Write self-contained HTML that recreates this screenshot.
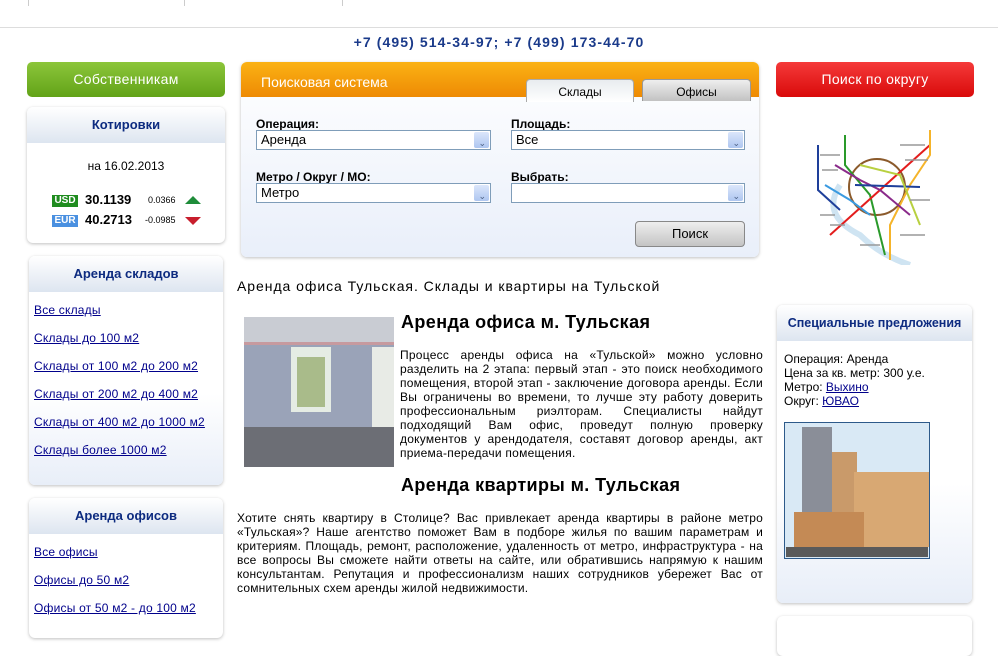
<!DOCTYPE html>
<html><head><meta charset="utf-8"><style>
*{margin:0;padding:0;box-sizing:border-box}
body{width:998px;height:630px;overflow:hidden;background:#fff;font-family:"Liberation Sans","DejaVu Sans",sans-serif;font-size:12px;color:#000;position:relative}
.a{position:absolute}
a{color:#00008b;text-decoration:underline}
.box{position:absolute;border-radius:6px;box-shadow:0 1px 3px rgba(0,0,0,.25);background:linear-gradient(#fff 60%,#e8eef8)}
.bh{height:36px;background:linear-gradient(#fff,#dde5f0);border-radius:6px 6px 0 0;text-align:center;line-height:36px;font-weight:bold;color:#0d2b80;font-size:13px}
.btn{position:absolute;border-radius:5px;color:#fff;text-align:center;line-height:34px;font-size:14px;height:35px;letter-spacing:.3px}
.sel{position:absolute;height:20px;border:1px solid #7f9db9;background:#fff;font-size:13px;line-height:18px;padding-left:4px}
.sel:after{content:"";position:absolute;right:1px;top:1px;width:15px;height:16px;background:linear-gradient(#dbe6fb,#aec6f0);border-radius:2px}
.sel i{position:absolute;right:4px;top:3px;z-index:2;font-style:normal;font-size:9px;color:#4d6185}
.lbl{position:absolute;font-weight:bold;font-size:12px}
.lk{position:absolute;left:34px;font-size:12px;letter-spacing:.2px}
p.j{text-align:justify;font-size:12px;line-height:14px}
</style></head><body>
<div class="a" style="left:0;top:0;width:998px;height:28px;border-bottom:1px solid #ddd"></div>
<div class="a" style="left:28px;top:0;width:1px;height:6px;background:#ccc"></div>
<div class="a" style="left:184px;top:0;width:1px;height:6px;background:#ccc"></div>
<div class="a" style="left:342px;top:0;width:1px;height:6px;background:#ccc"></div>
<div class="a" style="left:0;top:34px;width:998px;text-align:center;font-weight:bold;font-size:14px;color:#1a3a8a;letter-spacing:1.1px">+7 (495) 514-34-97; +7 (499) 173-44-70</div>

<div class="btn" style="left:27px;top:62px;width:198px;background:linear-gradient(#8cc63a,#62a318)">Собственникам</div>
<div class="btn" style="left:776px;top:62px;width:198px;background:linear-gradient(#f53a3a,#d90a0a)">Поиск по округу</div>

<div class="box" style="left:27px;top:107px;width:198px;height:136px;background:#fff">
<div class="bh">Котировки</div></div>
<div class="a" style="left:27px;top:159px;width:198px;text-align:center;font-size:12px">на 16.02.2013</div>
<div class="a" style="left:52px;top:195px;width:26px;height:12px;background:#1f8c1f;color:#fff;font-weight:bold;font-size:10px;line-height:12px;text-align:center">USD</div>
<div class="a" style="left:85px;top:192px;font-weight:bold;font-size:13px">30.1139</div>
<div class="a" style="left:148px;top:195px;font-size:9px">0.0366</div>
<div class="a" style="left:185px;top:196px;width:0;height:0;border-left:8px solid transparent;border-right:8px solid transparent;border-bottom:8px solid #1f8c3a"></div>
<div class="a" style="left:52px;top:215px;width:26px;height:12px;background:#4a90e0;color:#fff;font-weight:bold;font-size:10px;line-height:12px;text-align:center">EUR</div>
<div class="a" style="left:85px;top:212px;font-weight:bold;font-size:13px">40.2713</div>
<div class="a" style="left:145px;top:215px;font-size:9px">-0.0985</div>
<div class="a" style="left:185px;top:217px;width:0;height:0;border-left:8px solid transparent;border-right:8px solid transparent;border-top:8px solid #c81e2d"></div>

<div class="box" style="left:29px;top:256px;width:194px;height:229px"><div class="bh">Аренда складов</div></div>
<a class="lk" style="top:303px">Все склады</a>
<a class="lk" style="top:331px">Склады до 100 м2</a>
<a class="lk" style="top:359px">Склады от 100 м2 до 200 м2</a>
<a class="lk" style="top:387px">Склады от 200 м2 до 400 м2</a>
<a class="lk" style="top:415px">Склады от 400 м2 до 1000 м2</a>
<a class="lk" style="top:443px">Склады более 1000 м2</a>

<div class="box" style="left:29px;top:498px;width:194px;height:140px;background:#fff"><div class="bh">Аренда офисов</div></div>
<a class="lk" style="top:545px">Все офисы</a>
<a class="lk" style="top:573px">Офисы до 50 м2</a>
<a class="lk" style="top:601px">Офисы от 50 м2 - до 100 м2</a>

<div class="box" style="left:241px;top:62px;width:518px;height:195px;background:linear-gradient(#fff,#e9effa)">
<div style="height:35px;background:linear-gradient(#fbb214,#ee8a04);border-radius:6px 6px 0 0;color:#fff;font-size:14px;line-height:40px;padding-left:20px">Поисковая система</div></div>
<div class="a" style="left:526px;top:79px;width:108px;height:23px;background:linear-gradient(#e8ecef,#fff);border:1px solid #aaa;border-bottom:none;border-radius:4px 4px 0 0;text-align:center;line-height:24px;font-size:12px">Склады</div>
<div class="a" style="left:642px;top:79px;width:109px;height:22px;background:linear-gradient(#eee,#c2c2c2);border:1px solid #999;border-bottom:none;border-radius:4px 4px 0 0;text-align:center;line-height:24px;font-size:12px">Офисы</div>
<div class="lbl" style="left:256px;top:117px">Операция:</div>
<div class="sel" style="left:256px;top:130px;width:235px">Аренда<i>&#8964;</i></div>
<div class="lbl" style="left:511px;top:117px">Площадь:</div>
<div class="sel" style="left:511px;top:130px;width:234px">Все<i>&#8964;</i></div>
<div class="lbl" style="left:256px;top:170px">Метро / Округ / МО:</div>
<div class="sel" style="left:256px;top:183px;width:235px">Метро<i>&#8964;</i></div>
<div class="lbl" style="left:511px;top:170px">Выбрать:</div>
<div class="sel" style="left:511px;top:183px;width:234px"><i>&#8964;</i></div>
<div class="a" style="left:635px;top:221px;width:110px;height:26px;border:1px solid #888;border-radius:4px;background:linear-gradient(#eee,#c4c4c4);text-align:center;line-height:24px;font-size:13px">Поиск</div>

<svg class="a" style="left:800px;top:125px" width="150" height="140" viewBox="0 0 150 140">
<path d="M40 60 Q20 90 60 110 Q80 130 110 140" stroke="#cfe4f2" stroke-width="6" fill="none"/>
<circle cx="77" cy="62" r="28" stroke="#8b5a2b" stroke-width="2" fill="none"/>
<path d="M18 20 V65 L40 85" stroke="#1e3f9a" stroke-width="2" fill="none"/>
<path d="M45 10 V40 L70 70 L85 130" stroke="#2a9a2a" stroke-width="2" fill="none"/>
<path d="M130 20 L30 110" stroke="#e31d1d" stroke-width="2" fill="none"/>
<path d="M130 5 V30 L110 60 L90 100 L90 135" stroke="#f5b42a" stroke-width="2" fill="none"/>
<path d="M25 60 L50 75 L70 90" stroke="#3a9ae0" stroke-width="2" fill="none"/>
<path d="M35 40 L60 55 L80 65 L110 90" stroke="#8a2a8a" stroke-width="2" fill="none"/>
<path d="M55 60 L120 62" stroke="#1e3f9a" stroke-width="2" fill="none"/>
<path d="M60 40 L100 50 L120 100" stroke="#b8d040" stroke-width="2" fill="none"/>
<path d="M20 30 H40 M22 45 H38 M100 20 H125 M105 35 H128 M20 90 H35 M100 110 H125 M30 100 H45 M60 120 H80 M110 75 H130" stroke="#999" stroke-width="1.5"/>
</svg>

<div class="a" style="left:237px;top:278px;font-size:14px;letter-spacing:.95px">Аренда офиса Тульская. Склады и квартиры на Тульской</div>
<svg class="a" style="left:244px;top:317px" width="150" height="150">
<rect width="150" height="150" fill="#9aa3b8"/><rect width="150" height="25" fill="#c9ccd3"/><rect y="25" width="150" height="3" fill="#c79a9f"/>
<rect x="47" y="30" width="40" height="65" fill="#e5ece4"/><rect x="53" y="40" width="28" height="50" fill="#a9bb8a"/>
<rect x="128" y="30" width="22" height="90" fill="#e8ebe6"/><rect y="110" width="150" height="40" fill="#6c6e75"/>
</svg>
<div class="a" style="left:401px;top:312px;font-weight:bold;font-size:18px;letter-spacing:.4px">Аренда офиса м. Тульская</div>
<p class="a j" style="left:400px;top:348px;width:363px;letter-spacing:.25px">Процесс аренды офиса на «Тульской» можно условно разделить на 2 этапа: первый этап - это поиск необходимого помещения, второй этап - заключение договора аренды. Если Вы ограничены во времени, то лучше эту работу доверить профессиональным риэлторам. Специалисты найдут подходящий Вам офис, проведут полную проверку документов у арендодателя, составят договор аренды, акт приема-передачи помещения.</p>
<div class="a" style="left:401px;top:475px;font-weight:bold;font-size:18px;letter-spacing:.4px">Аренда квартиры м. Тульская</div>
<p class="a j" style="left:237px;top:511px;width:526px;letter-spacing:.2px">Хотите снять квартиру в Столице? Вас привлекает аренда квартиры в районе метро «Тульская»? Наше агентство поможет Вам в подборе жилья по вашим параметрам и критериям. Площадь, ремонт, расположение, удаленность от метро, инфраструктура - на все вопросы Вы сможете найти ответы на сайте, или обратившись напрямую к нашим консультантам. Репутация и профессионализм наших сотрудников убережет Вас от сомнительных схем аренды жилой недвижимости.</p>

<div class="box" style="left:777px;top:305px;width:195px;height:298px"><div class="bh" style="font-size:12.5px">Специальные предложения</div></div>
<div class="a" style="left:784px;top:352px;font-size:12px;line-height:14px">Операция: Аренда<br>Цена за кв. метр: 300 у.е.<br>Метро: <a>Выхино</a><br>Округ: <a>ЮВАО</a></div>
<svg class="a" style="left:784px;top:422px" width="146" height="137">
<rect width="146" height="137" fill="#d9e9f5" stroke="#2d5a8a" stroke-width="2"/>
<rect x="18" y="5" width="30" height="105" fill="#8a8e98"/><rect x="48" y="30" width="25" height="80" fill="#c99a6a"/>
<rect x="70" y="50" width="75" height="75" fill="#d8a873"/><rect x="10" y="90" width="70" height="40" fill="#c48a55"/>
<rect x="2" y="125" width="142" height="10" fill="#5a5a5a"/>
</svg>
<div class="box" style="left:777px;top:616px;width:195px;height:40px;background:#fff"></div>
</body></html>
